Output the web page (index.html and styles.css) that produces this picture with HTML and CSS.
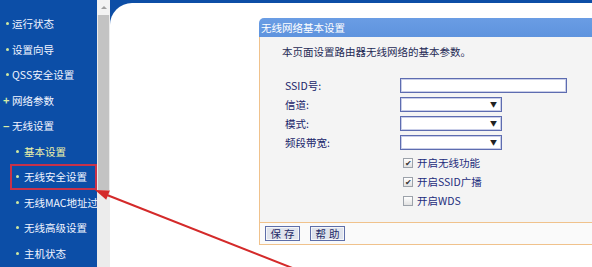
FILE: index.html
```html
<!DOCTYPE html>
<html lang="zh-CN">
<head>
    <meta charset="UTF-8">
    <meta name="viewport" content="width=device-width, initial-scale=1.0">
    <title>无线网络基本设置</title>
    <link rel="stylesheet" href="styles.css">
</head>
<body>
    <div class="page">
        <nav class="sidebar">
            <ul class="menu">
                <li class="item"><span class="dot"></span>运行状态</li>
                <li class="item"><span class="dot"></span>设置向导</li>
                <li class="item"><span class="dot"></span>QSS安全设置</li>
                <li class="item"><span class="sign">+</span>网络参数</li>
                <li class="item"><span class="sign">−</span>无线设置</li>
                <li class="item sub current"><span class="dot"></span>基本设置</li>
                <li class="item sub selected"><span class="dot"></span>无线安全设置</li>
                <li class="item sub"><span class="dot"></span>无线MAC地址过滤</li>
                <li class="item sub"><span class="dot"></span>无线高级设置</li>
                <li class="item sub"><span class="dot"></span>主机状态</li>
            </ul>
        </nav>

        <div class="scrollbar">
            <div class="scroll-up"><span class="up-arrow"></span></div>
            <div class="thumb"></div>
            <div class="track"></div>
        </div>

        <main class="main">
            <div class="content">
                <section class="panel">
                    <div class="panel-title">无线网络基本设置</div>
                    <div class="panel-body">
                        <p class="intro">本页面设置路由器无线网络的基本参数。</p>
                        <div class="form">
                            <label class="label">SSID号:</label>
                            <div class="field"><div class="input"></div></div>

                            <label class="label">信道:</label>
                            <div class="field"><div class="select"><span class="caret">▼</span></div></div>

                            <label class="label">模式:</label>
                            <div class="field"><div class="select"><span class="caret">▼</span></div></div>

                            <label class="label">频段带宽:</label>
                            <div class="field"><div class="select"><span class="caret">▼</span></div></div>

                            <div class="check-row"><span class="box">✔</span>开启无线功能</div>
                            <div class="check-row"><span class="box">✔</span>开启SSID广播</div>
                            <div class="check-row"><span class="box"></span>开启WDS</div>
                        </div>
                    </div>
                    <div class="panel-buttons">
                        <button class="btn">保存</button>
                        <button class="btn">帮助</button>
                    </div>
                </section>
            </div>
        </main>
    </div>

    <!-- 红色指示箭头 -->
    <svg class="arrow" width="592" height="267" viewBox="0 0 592 267">
        <line x1="107" y1="195" x2="300" y2="271" stroke="#d42a2a" stroke-width="2"/>
        <polygon points="95,190 106.2,199.8 109.9,190.5" fill="#d42a2a"/>
    </svg>
</body>
</html>
```

FILE: styles.css
```css
html, body {
    height: 267px;
    overflow: hidden;
}

body {
    margin: 0;
    font-family: "Noto Sans CJK SC", "Liberation Sans", sans-serif;
    font-size: 10.5px;
    background-color: #ffffff;
}

.page {
    display: flex;
    height: 267px;
}

/* 左侧菜单 */
.sidebar {
    width: 97px;
    flex-shrink: 0;
    background-color: #0c4ea7;
    overflow: hidden;
    padding-top: 11px;
    box-sizing: border-box;
}

.menu {
    list-style: none;
    margin: 0;
    padding: 0;
}

.item {
    display: flex;
    align-items: center;
    height: 25.5px;
    padding-left: 6px;
    color: #f2f5ff;
    white-space: nowrap;
    box-sizing: border-box;
}

.dot {
    width: 3px;
    height: 3px;
    border-radius: 50%;
    background-color: #cfe8a0;
    margin-right: 3px;
    flex-shrink: 0;
}

.sign {
    width: 9px;
    margin-left: -3px;
    color: #d8eca8;
    font-size: 11px;
    font-weight: bold;
    flex-shrink: 0;
}

.sub {
    margin-left: 10px;
    padding-left: 4px;
    border: 2px solid transparent;
}

.sub .dot {
    margin-right: 5px;
}

.current {
    color: #eef2a8;
}

.selected {
    border-color: #c8324a;
}

/* 滚动条 */
.scrollbar {
    width: 13px;
    flex-shrink: 0;
    display: flex;
    flex-direction: column;
    background-color: #ececec;
}

.scroll-up {
    height: 15px;
    background-color: #f3f3f3;
    display: flex;
    justify-content: center;
    align-items: center;
}

.up-arrow {
    width: 0;
    height: 0;
    border-left: 3px solid transparent;
    border-right: 3px solid transparent;
    border-bottom: 3px solid #a0a0a0;
}

.thumb {
    height: 175px;
    background-color: #c3c3c3;
    margin: 0 1px;
}

.track {
    flex: 1;
}

/* 主区域 */
.main {
    flex: 1;
    background-color: #0d4ea6;
    padding-top: 3px;
    box-sizing: border-box;
    overflow: hidden;
}

.content {
    height: 100%;
    background-color: #ffffff;
    border-top-left-radius: 22px;
    padding: 15px 0 0 149px;
    box-sizing: border-box;
}

.panel {
    width: 420px;
}

.panel-title {
    height: 19px;
    line-height: 19px;
    padding-left: 2px;
    color: #ffffff;
    background: linear-gradient(#6a9de4, #5e93de);
    border-top-left-radius: 5px;
}

.panel-body {
    background-color: #f4f4f4;
    border-left: 1px solid #f0c28c;
    border-bottom: 1px solid #f0c28c;
    padding: 8px 0 13px 0;
}

.intro {
    margin: 0;
    padding-left: 22px;
    line-height: 14px;
    color: #1e2a55;
}

.form {
    display: grid;
    grid-template-columns: 115px 1fr;
    grid-auto-rows: 19px;
    margin-top: 17px;
    padding-left: 25px;
}

.label {
    line-height: 19px;
    color: #18246a;
}

.field {
    padding-top: 2px;
}

.input {
    width: 167px;
    height: 15px;
    background-color: #ffffff;
    border: 1px solid #5d6cb0;
    box-shadow: inset 0 0 0 1px #c9cee8;
    box-sizing: border-box;
}

.select {
    width: 102px;
    height: 15px;
    background-color: #ffffff;
    border: 1px solid #5d6cb0;
    box-shadow: inset 0 0 0 1px #c9cee8;
    box-sizing: border-box;
    display: flex;
    justify-content: flex-end;
    align-items: center;
    padding-right: 4px;
}

.caret {
    font-size: 7px;
    line-height: 7px;
    color: #222222;
}

.check-row {
    grid-column: 2;
    height: 21px;
    display: flex;
    align-items: center;
    padding-left: 3px;
    color: #1c2c7c;
}

.box {
    width: 10px;
    height: 10px;
    border: 1px solid #9ca2aa;
    background: linear-gradient(#ffffff, #e2e2e2);
    box-sizing: border-box;
    margin-right: 4px;
    font-size: 8px;
    line-height: 8px;
    color: #333333;
    text-align: center;
}

.panel-buttons {
    height: 22px;
    background-color: #fafafa;
    border-left: 1px solid #f0c28c;
    border-bottom: 1px solid #f0c28c;
    padding: 3px 0 0 5px;
    box-sizing: border-box;
    display: flex;
    gap: 10px;
    align-items: flex-start;
}

.btn {
    width: 35px;
    height: 15px;
    padding: 0;
    font-family: inherit;
    font-size: 10.5px;
    line-height: 13px;
    letter-spacing: 3px;
    text-indent: 3px;
    color: #1e2a66;
    background-color: #dfe3ec;
    border: 1px solid #5e6ea8;
    box-shadow: inset 0 0 0 1px #f4f6fa;
}

.arrow {
    position: fixed;
    top: 0;
    left: 0;
    pointer-events: none;
}
```
